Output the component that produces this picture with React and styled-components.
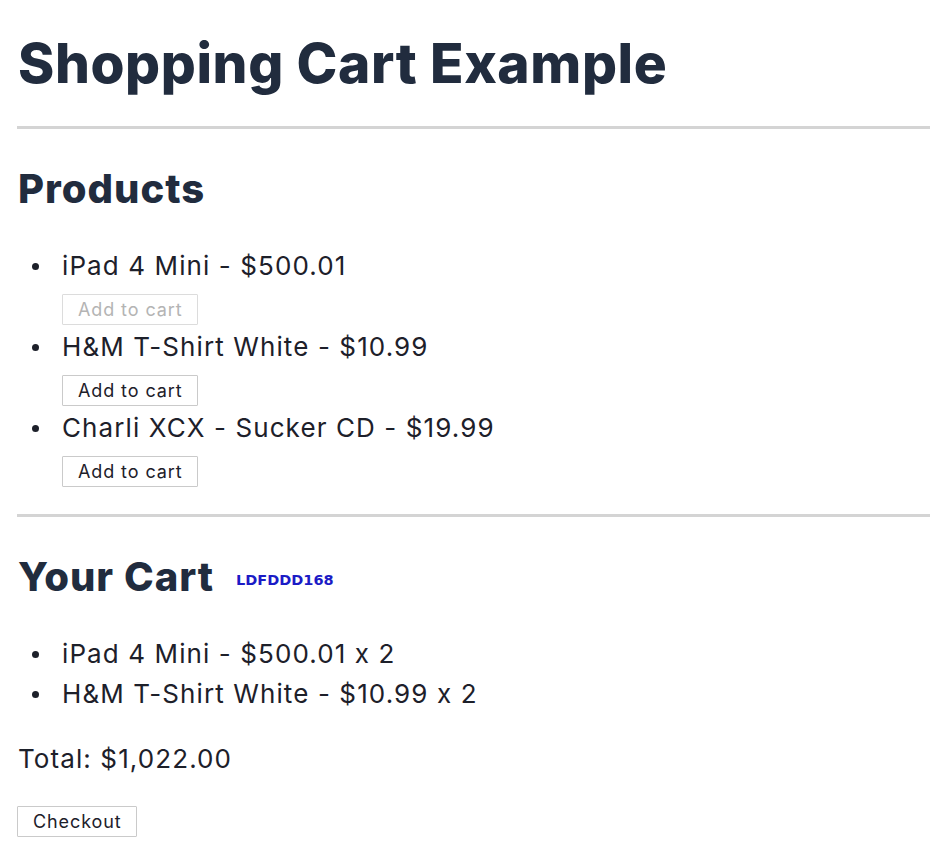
import React, { useState } from 'react';
import styled, { createGlobalStyle } from 'styled-components';

const GlobalStyle = createGlobalStyle`
  html, body {
    margin: 0;
    padding: 0;
    background: #ffffff;
  }
  body {
    font-family: Inter, "Noto Sans", sans-serif;
    font-feature-settings: "calt" 0;
    color: #1d202a;
  }
`;

const Page = styled.div`
  padding: 32px 0 20px 18px;
`;

const Title = styled.h1`
  margin: 0;
  font-size: 55px;
  line-height: 62px;
  font-weight: 800;
  color: #212c3e;
  letter-spacing: 0.6px;
`;

const Rule = styled.hr`
  margin: ${({ top }) => top}px 0 37px -1px;
  border: none;
  height: 3px;
  background: #d4d4d4;
`;

const SectionTitle = styled.h2`
  margin: 0;
  display: flex;
  align-items: baseline;
  gap: 22px;
  font-size: 40px;
  line-height: 46px;
  font-weight: 800;
  color: #212c3e;
  letter-spacing: 1px;
`;

const Badge = styled.span`
  font-family: "DejaVu Sans", Verdana, sans-serif;
  font-size: 14.5px;
  font-weight: 700;
  letter-spacing: 0;
  color: #1b1bc6;
  position: relative;
  top: -6px;
`;

const List = styled.ul`
  margin: ${({ top }) => top}px 0 0 0;
  padding: 0 0 0 44px;
  list-style: none;
`;

const Item = styled.li`
  position: relative;
  font-size: 26px;
  line-height: 40px;
  letter-spacing: 1.1px;
  color: #1d202a;

  &::before {
    content: '';
    position: absolute;
    left: -30px;
    top: 17px;
    width: 7px;
    height: 7px;
    border-radius: 50%;
    background: #1d202a;
  }
`;

const Button = styled.button`
  display: block;
  font-family: Inter, "Noto Sans", sans-serif;
  font-feature-settings: "calt" 0;
  font-size: 18px;
  line-height: 21px;
  letter-spacing: 0.9px;
  padding: 4px 14px 4px 15px;
  background: #ffffff;
  color: ${({ disabled }) => (disabled ? '#b4b4b4' : '#1d202a')};
  border: 1.5px solid ${({ disabled }) => (disabled ? '#dcdcdc' : '#cacaca')};
  border-radius: 1px;
  cursor: pointer;
  margin: ${({ spacing }) => spacing || '0'};
`;

const Total = styled.p`
  margin: 25px 0 27px 0;
  font-size: 26px;
  line-height: 40px;
  letter-spacing: 1.1px;
`;

const products = [
  { id: 1, title: 'iPad 4 Mini', price: 500.01, inventory: 0 },
  { id: 2, title: 'H&M T-Shirt White', price: 10.99, inventory: 8 },
  { id: 3, title: 'Charli XCX - Sucker CD', price: 19.99, inventory: 5 },
];

export default function App() {
  const [cart] = useState([
    { id: 1, title: 'iPad 4 Mini', price: 500.01, quantity: 2 },
    { id: 2, title: 'H&M T-Shirt White', price: 10.99, quantity: 2 },
  ]);

  const total = cart.reduce((sum, p) => sum + p.price * p.quantity, 0);

  return (
    <Page>
      <GlobalStyle />
      <Title>Shopping Cart Example</Title>
      <Rule top={32} />
      <SectionTitle>Products</SectionTitle>
      <List top={34}>
        {products.map((p) => (
          <Item key={p.id}>
            {p.title} - ${p.price}
            <Button disabled={p.inventory === 0} spacing="8px 0 2px 0">
              Add to cart
            </Button>
          </Item>
        ))}
      </List>
      <Rule top={27} />
      <SectionTitle>
        Your Cart <Badge>LDFDDD168</Badge>
      </SectionTitle>
      <List top={25}>
        {cart.map((p) => (
          <Item key={p.id}>
            {p.title} - ${p.price} x {p.quantity}
          </Item>
        ))}
      </List>
      <Total>Total: ${total.toLocaleString('en-US', { minimumFractionDigits: 2 })}</Total>
      <Button spacing="0 0 0 -1px">Checkout</Button>
    </Page>
  );
}
